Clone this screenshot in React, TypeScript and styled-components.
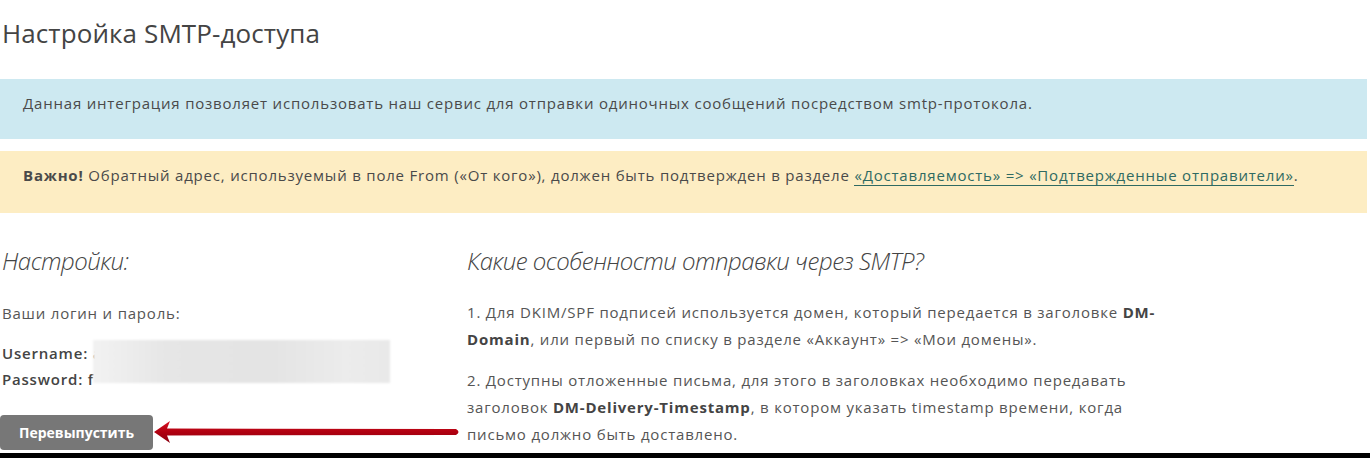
import React from "react";
import styled, { createGlobalStyle } from "styled-components";

const GlobalStyle = createGlobalStyle`
  html, body {
    margin: 0;
    padding: 0;
    background: #fff;
  }
  body {
    font-family: "Open Sans", "Liberation Sans", sans-serif;
    color: #555;
    font-size: 15px;
    letter-spacing: 0.8px;
  }
`;

const Page = styled.div`
  width: 1370px;
  height: 458px;
  display: flex;
  flex-direction: column;
  overflow: hidden;
`;

const Content = styled.div`
  width: 1367px;
  flex: 1;
`;

const Title = styled.h1`
  margin: 0;
  padding: 15px 0 0 2px;
  height: 64px;
  box-sizing: border-box;
  font-size: 26px;
  font-weight: 400;
  line-height: 36px;
  letter-spacing: 0.1px;
  color: #444;
`;

const Alert = styled.div<{ $tone: "info" | "warning" }>`
  box-sizing: border-box;
  height: ${(p) => (p.$tone === "info" ? "60px" : "62px")};
  padding: 13px 23px 0;
  line-height: 22px;
  color: #4a4a4a;
  background: ${(p) => (p.$tone === "info" ? "#cde9f1" : "#fdedc3")};
  margin-top: ${(p) => (p.$tone === "info" ? "15px" : "12px")};

  b {
    font-weight: 700;
  }
`;

const InlineLink = styled.a`
  color: #2f6a62;
  text-decoration: none;
  border-bottom: 1px solid #2f6a62;
`;

const Columns = styled.div`
  display: grid;
  grid-template-columns: 465px 694px;
  padding-left: 2px;
  margin-top: 31px;
`;

const Column = styled.div`
  display: flex;
  flex-direction: column;
`;

const SectionTitle = styled.h2`
  margin: 0;
  font-size: 24px;
  line-height: 34px;
  font-weight: 300;
  font-style: italic;
  letter-spacing: -0.5px;
  color: #444;
`;

const Text = styled.p`
  margin: 0;
  line-height: 27px;
  color: #555;

  b {
    font-weight: 700;
    color: #444;
  }
`;

const Intro = styled(Text)`
  margin-top: 22px;
`;

const Credentials = styled.div`
  position: relative;
  margin-top: 13px;
  line-height: 26px;
  font-weight: 600;
  color: #444;
`;

const Redacted = styled.div`
  position: absolute;
  left: 91px;
  top: 0;
  width: 297px;
  height: 43px;
  background: linear-gradient(
    90deg,
    #f2f2f2 0%,
    #e6e6e6 25%,
    #e4e4e4 60%,
    #ececec 85%,
    #e9e9e9 100%
  );
  filter: blur(1px);
`;

const Actions = styled.div`
  position: relative;
  margin-top: 23px;
  margin-left: -2px;
  height: 35px;
`;

const Button = styled.button`
  height: 35px;
  width: 153px;
  border: none;
  border-radius: 4px;
  background: #777;
  color: #fff;
  font-family: "Open Sans", "Liberation Sans", sans-serif;
  font-size: 14px;
  font-weight: 700;
  letter-spacing: 0;
  cursor: pointer;
`;

const Pointer = styled.svg`
  position: absolute;
  left: 153px;
  top: 4px;
`;

const List = styled.div`
  margin-top: 21px;
  display: flex;
  flex-direction: column;
  gap: 14px;
`;

const BottomBar = styled.div`
  height: 5px;
  background: #000;
`;

const RedArrow = () => (
  <Pointer width="310" height="26" viewBox="0 0 310 26">
    <defs>
      <linearGradient id="shaft" x1="0" y1="0" x2="0" y2="1">
        <stop offset="0" stopColor="#d81222" />
        <stop offset="0.5" stopColor="#b00010" />
        <stop offset="1" stopColor="#8a0010" />
      </linearGradient>
    </defs>
    <path
      d="M1 13 L17 2 L14 9.5 L303 10 Q308 13 303 16 L14 16.5 L17 24 Z"
      fill="url(#shaft)"
    />
  </Pointer>
);

export default function App() {
  return (
    <Page>
      <GlobalStyle />
      <Content>
        <Title>Настройка SMTP-доступа</Title>
        <Alert $tone="info">
          Данная интеграция позволяет использовать наш сервис для отправки одиночных сообщений
          посредством smtp-протокола.
        </Alert>
        <Alert $tone="warning">
          <b>Важно!</b> Обратный адрес, используемый в поле From («От кого»), должен быть
          подтвержден в разделе{" "}
          <InlineLink href="#">«Доставляемость» =&gt; «Подтвержденные отправители»</InlineLink>.
        </Alert>
        <Columns>
          <Column>
            <SectionTitle>Настройки:</SectionTitle>
            <Intro>Ваши логин и пароль:</Intro>
            <Credentials>
              <div>Username: a</div>
              <div>Password: f</div>
              <Redacted />
            </Credentials>
            <Actions>
              <Button>Перевыпустить</Button>
              <RedArrow />
            </Actions>
          </Column>
          <Column>
            <SectionTitle>Какие особенности отправки через SMTP?</SectionTitle>
            <List>
              <Text>
                1. Для DKIM/SPF подписей используется домен, который передается в заголовке{" "}
                <b>DM-Domain</b>, или первый по списку в разделе «Аккаунт» =&gt; «Мои домены».
              </Text>
              <Text>
                2. Доступны отложенные письма, для этого в заголовках необходимо передавать
                заголовок <b>DM-Delivery-Timestamp</b>, в котором указать timestamp времени, когда
                письмо должно быть доставлено.
              </Text>
            </List>
          </Column>
        </Columns>
      </Content>
      <BottomBar />
    </Page>
  );
}
